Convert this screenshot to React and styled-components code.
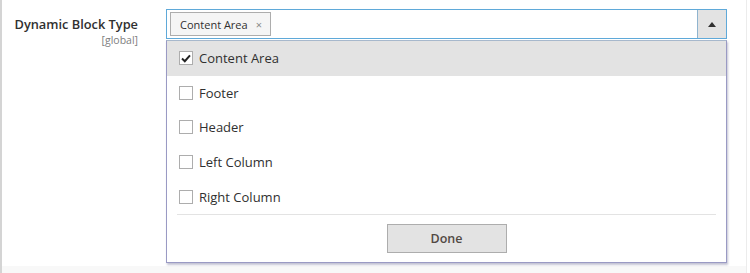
import React from "react";
import styled, { createGlobalStyle } from "styled-components";

const GlobalStyle = createGlobalStyle`
    html, body {
        margin: 0;
        padding: 0;
        background: #ffffff;
    }
    body {
        font-family: 'Open Sans', 'Noto Sans', sans-serif;
        color: #303030;
    }
`

const Page = styled.div`
    width: 747px;
    height: 273px;
    border-left: 2px solid #d4d4d4;
    border-right: 1px solid #ececec;
    box-sizing: border-box;
    background: linear-gradient(to bottom, #ffffff 0, #ffffff 266px, #f8f8f8 266px);
`

const FieldRow = styled.div`
    display: flex;
    align-items: flex-start;
    gap: 28px;
    padding-top: 9px;
`

const LabelCol = styled.div`
    width: 136px;
    text-align: right;
    padding-top: 6px;

    .title {
        font-size: 12.8px;
        font-weight: 600;
        color: #303030;
        line-height: 18px;
    }

    .scope {
        font-size: 10.5px;
        color: #808080;
        line-height: 14px;
    }
`

const Control = styled.div`
    width: 561px;
    display: flex;
    flex-direction: column;
`

const SelectBox = styled.div`
    height: 30px;
    display: flex;
    align-items: stretch;
    border: 1px solid #5fa9d9;
    box-sizing: border-box;
    background: #ffffff;
`

const Tags = styled.div`
    flex: 1;
    display: flex;
    align-items: center;
    padding-left: 3px;
`

const Tag = styled.span`
    display: inline-flex;
    align-items: center;
    gap: 8px;
    height: 24px;
    padding: 0 8px 0 9px;
    box-sizing: border-box;
    background: #f5f5f5;
    border: 1px solid #adadad;
    font-size: 11px;
    color: #303030;

    .remove {
        font-size: 11px;
        color: #8a8a8a;
    }
`

const ToggleButton = styled.button`
    width: 29px;
    border: 0;
    border-left: 1px solid #8fb4cf;
    background: #e3e3e3;
    padding: 0;
    display: flex;
    align-items: center;
    justify-content: center;
    cursor: pointer;
`

const Menu = styled.div`
    margin-top: 1px;
    border: 1px solid #9a9ac4;
    border-top-color: #a7b8cc;
    box-shadow: 1px 2px 2px rgba(80, 80, 130, 0.35);
    background: #ffffff;
    display: flex;
    flex-direction: column;
`

const Options = styled.ul`
    list-style: none;
    margin: 0;
    padding: 0;
`

const Option = styled.li`
    height: 34.6px;
    display: flex;
    align-items: center;
    gap: 6px;
    padding-left: 12px;
    background: ${p => (p.$active ? "#e3e3e3" : "transparent")};
    font-size: 13px;
    color: #303030;
`

const Box = styled.span`
    width: 14px;
    height: 14px;
    box-sizing: border-box;
    border: 1px solid #adadad;
    background: #ffffff;
    display: flex;
    align-items: center;
    justify-content: center;
`

const Footer = styled.div`
    margin: 0 10px;
    border-top: 1px solid #e3e3e3;
    display: flex;
    justify-content: center;
    padding: 9px 0 9px;
`

const DoneButton = styled.button`
    width: 120px;
    height: 29px;
    background: #e3e3e3;
    border: 1px solid #adadad;
    font-family: 'Open Sans', 'Noto Sans', sans-serif;
    font-size: 12.5px;
    font-weight: 600;
    color: #514943;
    cursor: pointer;
`

const items = ["Content Area", "Footer", "Header", "Left Column", "Right Column"]

function Check() {
    return (
        <svg width="10" height="9" viewBox="0 0 10 9">
            <path d="M1 4.6 L3.8 7.2 L9 1.4" fill="none" stroke="#222222" strokeWidth="2" />
        </svg>
    )
}

export default function App() {
    return (
        <>
            <GlobalStyle />
            <Page>
                <FieldRow>
                    <LabelCol>
                        <div className="title">Dynamic Block Type</div>
                        <div className="scope">[global]</div>
                    </LabelCol>
                    <Control>
                        <SelectBox>
                            <Tags>
                                <Tag>
                                    Content Area
                                    <span className="remove">&times;</span>
                                </Tag>
                            </Tags>
                            <ToggleButton>
                                <svg width="8" height="5" viewBox="0 0 8 5">
                                    <path d="M0 5 L4 0 L8 5 Z" fill="#303030" />
                                </svg>
                            </ToggleButton>
                        </SelectBox>
                        <Menu>
                            <Options>
                                {items.map((item, i) => (
                                    <Option key={item} $active={i === 0}>
                                        <Box>{i === 0 && <Check />}</Box>
                                        {item}
                                    </Option>
                                ))}
                            </Options>
                            <Footer>
                                <DoneButton>Done</DoneButton>
                            </Footer>
                        </Menu>
                    </Control>
                </FieldRow>
            </Page>
        </>
    )
}
